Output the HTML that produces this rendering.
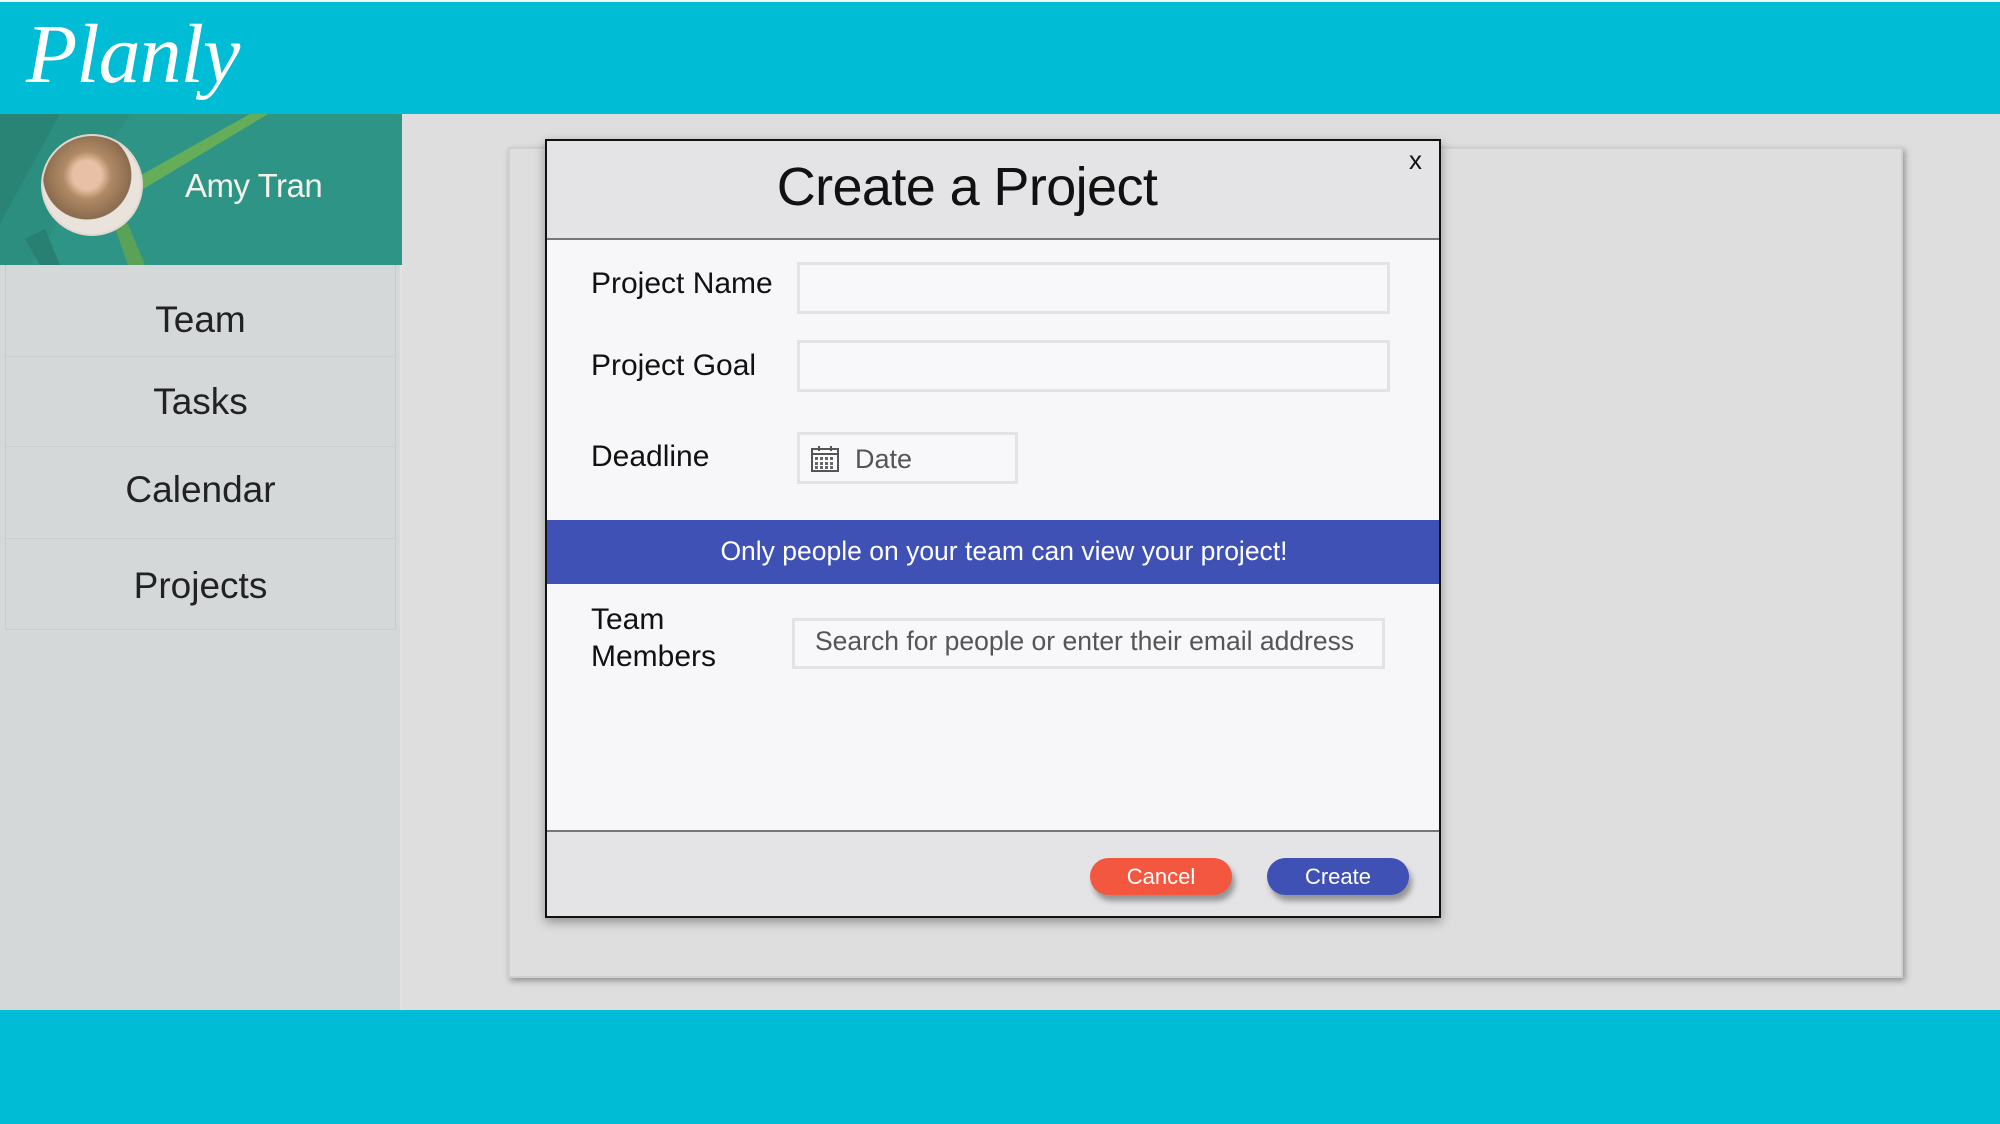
<!DOCTYPE html>
<html><head><meta charset="utf-8"><style>
*{margin:0;padding:0;box-sizing:border-box}
body{width:2000px;height:1124px;position:relative;overflow:hidden;background:#dedede;font-family:"Liberation Sans",Arial,sans-serif;color:#111}
.abs{position:absolute}
#hdr{left:0;top:0;width:2000px;height:114px;background:#00bcd4;border-top:2px solid #e8f8fb}
#logo{left:26px;top:6px;font-family:"Liberation Serif",serif;font-style:italic;font-size:84px;color:#fff;letter-spacing:-1px}
#foot{left:0;top:1010px;width:2000px;height:114px;background:#00bcd4}
#side{left:0;top:114px;width:402px;height:896px;background:#d5d8d9;border-right:2px solid #e2e2e2}
#prof{left:0;top:114px;width:402px;height:151px;background:#2e9486;overflow:hidden}
.menu{left:5px;width:391px;border:1px solid #cacccd;border-top:none;background:#d5d8d9;text-align:center;font-size:37px;color:#222}
#panel{left:508px;top:147px;width:1395px;height:831px;background:#dedede;border:2px solid #cfcfcf;box-shadow:2px 3px 6px rgba(0,0,0,.35)}
#dlg{left:545px;top:139px;width:896px;height:779px;background:#f7f7f9;border:2px solid #111;box-shadow:0 4px 10px rgba(0,0,0,.35)}
.lbl{font-size:30px;color:#111}
.inp{background:#f8f8fa;border:3px solid #e3e3e5}
.btn{height:37px;border-radius:19px;color:#fff;font-size:22px;text-align:center;line-height:37px;box-shadow:3px 6px 6px rgba(0,0,0,.35)}
</style></head><body>
<div id="hdr" class="abs"></div>
<div id="logo" class="abs">Planly</div>
<div id="side" class="abs"></div>
<div id="prof" class="abs">
<svg width="402" height="151" style="position:absolute;left:0;top:0">
<polygon points="0,0 60,0 0,110" fill="#2a8476"/>
<polygon points="60,0 130,0 30,151 0,151 0,110" fill="#2a8a7c" opacity=".6"/>
<polygon points="250,0 268,0 135,80 125,70" fill="#66ad5a"/>
<polygon points="110,100 128,110 145,151 128,151" fill="#5aa257"/>
<polygon points="25,125 45,115 60,151 40,151" fill="#278072"/>
</svg>
<div class="abs" style="left:41px;top:20px;width:102px;height:102px;border-radius:50%;background:radial-gradient(circle at 45% 40%,#e8c0a5 0 18%,#b08a65 30%,#8a6b4e 55%,#e9e3dc 56%);border:2px solid #e0d8d0"></div>
<div class="abs" style="left:185px;top:53px;font-size:33px;color:#f4f0ea;font-family:'Liberation Sans',sans-serif;letter-spacing:-0.5px">Amy Tran</div>
</div>
<div class="abs menu" style="top:265px;height:92px;line-height:110px">Team</div>
<div class="abs menu" style="top:357px;height:90px;line-height:90px">Tasks</div>
<div class="abs menu" style="top:447px;height:92px;line-height:86px">Calendar</div>
<div class="abs menu" style="top:539px;height:91px;line-height:94px">Projects</div>
<div id="foot" class="abs"></div>
<div id="panel" class="abs"></div>
<div id="dlg" class="abs">
 <div class="abs" style="left:0;top:0;width:892px;height:99px;background:#e4e4e6;border-bottom:2px solid #777"></div>
 <div class="abs" style="left:0;top:15px;width:840px;text-align:center;font-size:54px;letter-spacing:-0.6px">Create a Project</div>
 <div class="abs" style="left:862px;top:4px;font-size:26px">x</div>
 <div class="abs lbl" style="left:44px;top:126px">Project Name</div>
 <div class="abs inp" style="left:250px;top:121px;width:593px;height:52px"></div>
 <div class="abs lbl" style="left:44px;top:208px">Project Goal</div>
 <div class="abs inp" style="left:250px;top:199px;width:593px;height:52px"></div>
 <div class="abs lbl" style="left:44px;top:299px">Deadline</div>
 <div class="abs inp" style="left:250px;top:291px;width:221px;height:52px"></div>
 <svg class="abs" style="left:264px;top:304px" width="28" height="28" viewBox="0 0 28 28"><rect x="1" y="4" width="26" height="22" fill="#fff" stroke="#555" stroke-width="2"/><line x1="1" y1="9" x2="27" y2="9" stroke="#555" stroke-width="2"/><line x1="8" y1="1" x2="8" y2="6" stroke="#555" stroke-width="2"/><line x1="20" y1="1" x2="20" y2="6" stroke="#555" stroke-width="2"/><g fill="#666"><rect x="4" y="12" width="3" height="3"/><rect x="9" y="12" width="3" height="3"/><rect x="14" y="12" width="3" height="3"/><rect x="19" y="12" width="3" height="3"/><rect x="4" y="17" width="3" height="3"/><rect x="9" y="17" width="3" height="3"/><rect x="14" y="17" width="3" height="3"/><rect x="19" y="17" width="3" height="3"/><rect x="4" y="21" width="3" height="3"/><rect x="9" y="21" width="3" height="3"/><rect x="14" y="21" width="3" height="3"/><rect x="19" y="21" width="3" height="3"/></g></svg>
 <div class="abs" style="left:308px;top:303px;font-size:27px;color:#555">Date</div>
 <div class="abs" style="left:0;top:379px;width:892px;height:64px;background:#3f51b5;color:#fff;text-align:center;line-height:62px;font-size:26.5px;padding-left:22px">Only people on your team can view your project!</div>
 <div class="abs lbl" style="left:44px;top:460px;line-height:37px">Team<br>Members</div>
 <div class="abs inp" style="left:245px;top:477px;width:593px;height:51px"></div>
 <div class="abs" style="left:268px;top:485px;font-size:26.5px;color:#555">Search for people or enter their email address</div>
 <div class="abs" style="left:0;top:689px;width:892px;height:86px;background:#e4e4e6;border-top:2px solid #777"></div>
 <div class="abs btn" style="left:543px;top:717px;width:142px;background:#f4573f">Cancel</div>
 <div class="abs btn" style="left:720px;top:717px;width:142px;background:#3f51b5">Create</div>
</div>
</body></html>
